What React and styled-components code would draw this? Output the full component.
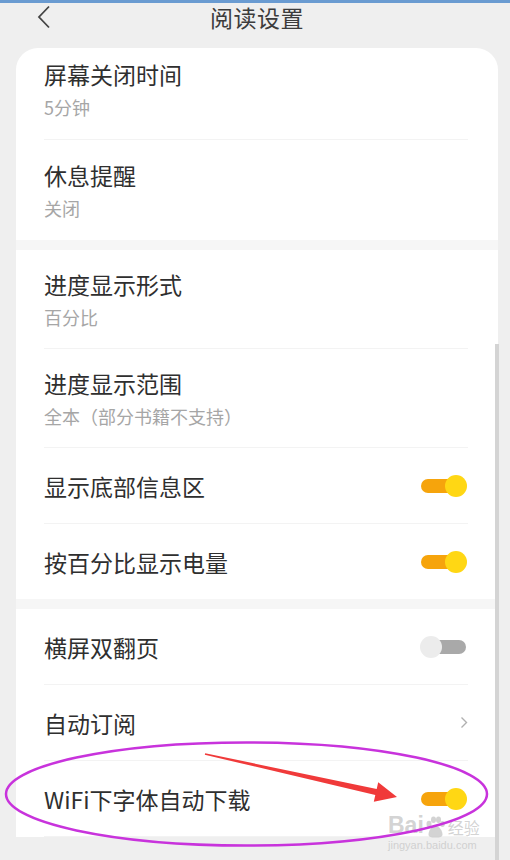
import React from 'react';
import styled, { createGlobalStyle } from 'styled-components';

const GlobalStyle = createGlobalStyle`
  html, body {
    margin: 0;
    padding: 0;
    background: #efefef;
  }
  body {
    font-family: "Noto Sans CJK SC", "Noto Sans", sans-serif;
  }
`;

const Page = styled.div`
  position: relative;
  width: 510px;
  height: 860px;
  overflow: hidden;
  background: #efefef;
`;

const TopBar = styled.div`
  height: 3px;
  background: #6a9bd1;
`;

const Header = styled.div`
  height: 45px;
  display: grid;
  grid-template-columns: 1fr auto 1fr;
  align-items: start;
`;

const BackButton = styled.div`
  padding: 2px 0 0 37px;
  display: flex;
`;

const Title = styled.div`
  font-size: 23px;
  line-height: 28px;
  color: #3c3c3c;
  letter-spacing: 0.5px;
  padding-left: 4px;
`;

const Card = styled.div`
  margin: 0 12px 0 16px;
  background: #fff;
  border-radius: 22px 22px 0 0;
`;

const Band = styled.div`
  height: 10px;
  background: #f6f6f6;
`;

const Row = styled.div`
  display: flex;
  align-items: center;
  justify-content: space-between;
  margin: 0 30px 0 28px;
  padding: ${(p) => (p.$first ? '11px 0 20px' : p.$sub ? `${p.$pad || 19}px 0` : '22.5px 0')};
  border-bottom: ${(p) => (p.$last ? 'none' : '1px solid #f3f3f3')};
`;

const Texts = styled.div`
  display: flex;
  flex-direction: column;
  gap: 6px;
`;

const Label = styled.div`
  font-size: 23px;
  line-height: 30px;
  color: #2f2f2f;
`;

const Sub = styled.div`
  font-size: 18px;
  line-height: 24px;
  color: #a6a6a6;
`;

const Switch = styled.div`
  position: relative;
  width: 47px;
  height: 22px;
  flex-shrink: 0;
  margin-right: 1px;

  &::before {
    content: '';
    position: absolute;
    top: 4px;
    height: 14px;
    border-radius: 7px;
    left: ${(p) => (p.$on ? '1px' : '12px')};
    right: ${(p) => (p.$on ? '12px' : '1px')};
    background: ${(p) => (p.$on ? '#f6a40c' : '#a9a9a9')};
  }

  &::after {
    content: '';
    position: absolute;
    top: 0;
    width: 22px;
    height: 22px;
    border-radius: 50%;
    left: ${(p) => (p.$on ? '25px' : '0')};
    background: ${(p) => (p.$on ? '#ffd714' : '#ececec')};
  }
`;

const Chevron = styled.svg`
  flex-shrink: 0;
`;

const ScrollBar = styled.div`
  position: absolute;
  left: 495px;
  top: 344px;
  bottom: 0;
  width: 4px;
  background: #d4d4d4;
`;

const Overlay = styled.svg`
  position: absolute;
  left: 0;
  top: 0;
  pointer-events: none;
`;

const Watermark = styled.div`
  position: absolute;
  left: 388px;
  top: 812px;
  display: flex;
  flex-direction: column;
  align-items: flex-start;
  white-space: nowrap;
  color: rgba(200, 200, 200, 0.8);
  font-family: "Liberation Sans", Arial, sans-serif;
  pointer-events: none;
`;

const MarkTop = styled.div`
  display: flex;
  align-items: flex-end;
  gap: 1px;
  font-size: 23px;
  line-height: 26px;
  font-weight: bold;
`;

const MarkCn = styled.span`
  font-family: "Noto Sans CJK SC", sans-serif;
  font-size: 16px;
  line-height: 22px;
  font-weight: 400;
  margin-left: 2px;
`;

const MarkUrl = styled.div`
  font-size: 11px;
  line-height: 14px;
`;

const Toggle = ({ label, on, last }) => (
  <Row $last={last}>
    <Label>{label}</Label>
    <Switch $on={on} />
  </Row>
);

export default function App() {
  return (
    <Page>
      <GlobalStyle />
      <TopBar />
      <Header>
        <BackButton>
          <svg width="14" height="24" viewBox="0 0 14 24">
            <polyline points="12,1.5 2,12 12,22.5" fill="none" stroke="#444" strokeWidth="1.8" />
          </svg>
        </BackButton>
        <Title>阅读设置</Title>
        <div />
      </Header>
      <Card>
        <Row $first $sub>
          <Texts>
            <Label>屏幕关闭时间</Label>
            <Sub>5分钟</Sub>
          </Texts>
        </Row>
        <Row $sub $pad={20} $last>
          <Texts>
            <Label>休息提醒</Label>
            <Sub>关闭</Sub>
          </Texts>
        </Row>
        <Band />
        <Row $sub>
          <Texts>
            <Label>进度显示形式</Label>
            <Sub>百分比</Sub>
          </Texts>
        </Row>
        <Row $sub>
          <Texts>
            <Label>进度显示范围</Label>
            <Sub>全本（部分书籍不支持）</Sub>
          </Texts>
        </Row>
        <Toggle label="显示底部信息区" on />
        <Toggle label="按百分比显示电量" on last />
        <Band />
        <Toggle label="横屏双翻页" on={false} />
        <Row>
          <Label>自动订阅</Label>
          <Chevron width="8" height="13" viewBox="0 0 8 13">
            <polyline points="1.5,1.5 6.5,6.5 1.5,11.5" fill="none" stroke="#b0b0b0" strokeWidth="1.4" />
          </Chevron>
        </Row>
        <Toggle label="WiFi下字体自动下载" on />
      </Card>
      <ScrollBar />
      <Watermark>
        <MarkTop>
          <span>Bai</span>
          <svg width="20" height="22" viewBox="0 0 20 22">
            <g fill="rgba(200,200,200,0.8)">
              <ellipse cx="4" cy="8" rx="2.5" ry="3.2" />
              <ellipse cx="8.5" cy="3.8" rx="2.5" ry="3.2" />
              <ellipse cx="13.5" cy="3.8" rx="2.5" ry="3.2" />
              <ellipse cx="17.5" cy="8" rx="2.3" ry="3" />
              <path d="M10.5 10c-4 0-7 5-7 8.5 0 2.5 2.5 3 7 3s7-.5 7-3c0-3.5-3-8.5-7-8.5z" />
            </g>
          </svg>
          <MarkCn>经验</MarkCn>
        </MarkTop>
        <MarkUrl>jingyan.baidu.com</MarkUrl>
      </Watermark>
      <Overlay width="510" height="860" viewBox="0 0 510 860">
        <ellipse cx="246.5" cy="794" rx="240.5" ry="51.5" fill="none" stroke="#c833dc" strokeWidth="2.5" />
        <polygon
          points="205.2,753.2 376.7,789.1 378.2,782.2 397,797 373.8,801.8 375.3,794.9 204.8,754.8"
          fill="#f03a3a"
        />
      </Overlay>
    </Page>
  );
}
